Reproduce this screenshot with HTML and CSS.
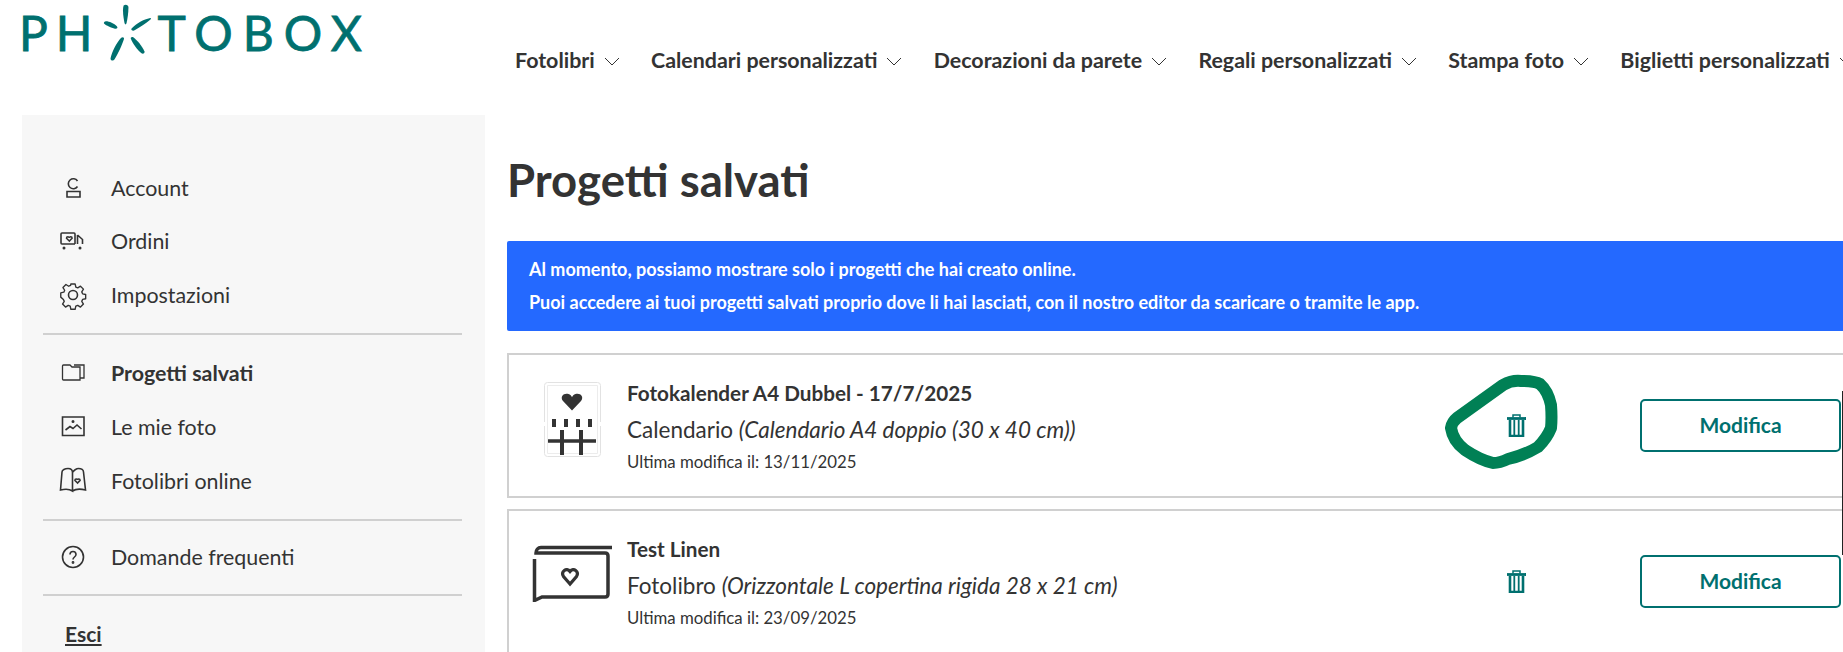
FILE: index.html
```html
<!DOCTYPE html>
<html lang="it">
<head>
<meta charset="utf-8">
<title>Progetti salvati</title>
<link rel="stylesheet" href="styles.css">
</head>
<body>
<header class="top">
  <a class="logo"><span>PH</span><svg class="star" viewBox="0 0 48 60"><g fill="#00706f"><path d="M20.500 1.500c2-1.700 5-.6 5 2 0 5-1 12-2 16.500-.5 1.500-1.500 1.500-2 0-1-5-2.500-14-1-18.500z"/><path d="M29 25c5-5 12-9 19-10.500 1-.2 1 1 .3 1.500-5 4-11 8-16 11-2.500 1.500-5-.3-3.300-2z"/><path d="M1.500 18c3-.5 9 2 12 5 1.500 1.500 0 3-2 2.500-4-1-9-3-11-5-1-1-.2-2.300 1-2.500z"/><path d="M28 36c-.5-1.500 1-2.500 2.500-1.500 4 3 9 9 11.500 14.500.8 2-1.500 3-3 2-4-3-9-10-11-15z"/><path d="M18 35c1.500-1.500 3.500-.5 2.800 1.500-2 6-6 15-9.800 21-1.200 2-4.500 1-4-1.500 1.500-6 6-16 11-21z"/></g></svg><span class="logo-end">TOBOX</span></a>
  <nav class="nav">
    <a class="nav-item">Fotolibri<svg class="chev" viewBox="0 0 16 9"><path d="M1 1l7 7 7-7"/></svg></a>
    <a class="nav-item">Calendari personalizzati<svg class="chev" viewBox="0 0 16 9"><path d="M1 1l7 7 7-7"/></svg></a>
    <a class="nav-item">Decorazioni da parete<svg class="chev" viewBox="0 0 16 9"><path d="M1 1l7 7 7-7"/></svg></a>
    <a class="nav-item">Regali personalizzati<svg class="chev" viewBox="0 0 16 9"><path d="M1 1l7 7 7-7"/></svg></a>
    <a class="nav-item">Stampa foto<svg class="chev" viewBox="0 0 16 9"><path d="M1 1l7 7 7-7"/></svg></a>
    <a class="nav-item">Biglietti personalizzati<svg class="chev" viewBox="0 0 16 9"><path d="M1 1l7 7 7-7"/></svg></a>
  </nav>
</header>
<div class="layout">
  <aside class="side">
    <ul class="menu">
      <li><svg class="ico" viewBox="0 0 30 30"><path d="M19.500 8a5 5 0 1 0 0 5.500M9 18.500h13M9 18.500h13v5.500H9z"/></svg>Account</li>
      <li><svg class="ico" viewBox="0 0 30 30"><path d="M17 18H4a1 1 0 0 1-1-1V8a1 1 0 0 1 1-1h12a1 1 0 0 1 1 1v10M19.500 9l5 4.500V18M19.500 9v9M11.300 15l-2.800-2.800c0-1.800 2.800-1.800 2.800-.3 0-1.500 2.800-1.500 2.800.3z"/><circle cx="6" cy="22" r=".7"/><circle cx="22" cy="22" r=".7"/></svg>Ordini</li>
      <li><svg class="ico" viewBox="0 0 30 30"><circle cx="15" cy="15" r="4.500"/><path d="M12.500 2h5l.8 3.600 2.300 1 3.200-2 3.500 3.500-2 3.200 1 2.300 3.600.8v5l-3.600.8-1 2.300 2 3.200-3.500 3.500-3.200-2-2.300 1-.8 3.600h-5l-.8-3.600-2.300-1-3.200 2-3.500-3.500 2-3.200-1-2.300L.600 17.500v-5l3.600-.8 1-2.300-2-3.200 3.500-3.500 3.200 2 2.300-1z" transform="translate(2.250 2.250) scale(.85)" stroke-linejoin="round"/></svg>Impostazioni</li>
    </ul>
    <hr class="rule">
    <ul class="menu wide">
      <li class="active"><svg class="ico thin" viewBox="0 0 30 30"><path d="M4.500 8c0-.5.500-1 1-1H12l2 2h8v13H5.500c-.5 0-1-.5-1-1zM16 7h10v13h-4"/></svg>Progetti salvati</li>
      <li><svg class="ico" viewBox="0 0 30 30"><path d="M4.500 5H26v18.500H4.500zM7.500 18l4.500-3.500 3 2 4-3.500 4.500 4"/><circle cx="15" cy="9.500" r=".7"/></svg>Le mie foto</li>
      <li><svg class="ico" viewBox="0 0 30 30"><path d="M14.500 25c-3-2-8-2-12-1l1.500-18c0-2 3-3.500 6-3.500 3 0 4.500 2 4.500 4zM14.500 25c3-2 9-2 13-1l-2-18c0-2-2-3.500-5-3.500-2 0-5 2-6 4M19.500 17l-2.600-2.600c0-1.800 2.600-1.800 2.600-.3 0-1.500 2.600-1.500 2.600.3zM14.500 6.500V25"/></svg>Fotolibri online</li>
    </ul>
    <hr class="rule">
    <ul class="menu single">
      <li><svg class="ico" viewBox="0 0 30 30"><circle cx="15" cy="15" r="10.500"/><path d="M12 12.500c0-4 6-4 6 0 0 2.500-3 2.500-3 5"/><circle cx="15" cy="20.500" r=".6"/></svg>Domande frequenti</li>
    </ul>
    <hr class="rule">
    <a class="logout">Esci</a>
  </aside>
  <main class="main">
    <h1 class="title">Progetti salvati</h1>
    <div class="notice">
      <p>Al momento, possiamo mostrare solo i progetti che hai creato online.</p>
      <p>Puoi accedere ai tuoi progetti salvati proprio dove li hai lasciati, con il nostro editor da scaricare o tramite le app.</p>
    </div>
    <article class="card">
      <div class="thumb"><svg class="cal" viewBox="0 0 57 75"><path d="M.5 40V3.500a3 3 0 0 1 3-3h50a3 3 0 0 1 3 3V40M.5 44v27.500a3 3 0 0 0 3 3h50a3 3 0 0 0 3-3V44" fill="none" stroke="#e2e2e2"/><path d="M3.500 3.500h50v68h-50z" fill="none" stroke="#ececec"/><path d="M28 28.500l-9-9.500c-3.500-4.500 1-8.500 5.500-7 1.700.6 3 1.800 3.500 3.300.5-1.500 1.800-2.700 3.500-3.300 4.500-1.500 9 2.500 5.500 7z" fill="#333"/><path d="M8 37h4v8H8zM20 37h4v8h-4zM32 37h4v8h-4zM44 37h4v8h-4zM4 57.300h48v3.400H4zM16 48h4v25h-4zM35 48h4v25h-4z" fill="#333"/></svg></div>
      <div class="info">
        <h2 class="name">Fotokalender A4 Dubbel - 17/7/2025</h2>
        <p class="kind">Calendario <em>(Calendario A4 doppio (30 x 40 cm))</em></p>
        <p class="date">Ultima modifica il: 13/11/2025</p>
      </div>
      <svg class="trash" viewBox="0 0 19 23"><path class="lid" d="M0 4.500h19"/><path class="handle" d="M6 3.500V1h7v2.500"/><path class="bin" d="M3 6v16h13V6"/><path class="slat" d="M7.300 6v16M11.700 6v16"/></svg>
      <a class="edit">Modifica</a>
    </article>
    <article class="card">
      <div class="thumb"><svg class="book" viewBox="0 0 80 57"><path d="M80 2.500H9C6 2.500 4 5 4 8h69q3 0 3 3v38q0 3-3 3H10l-7.500 3.500V14" fill="none" stroke="#333" stroke-width="3.500"/><path d="M38 39l-6.500-7.500c-3-5 3-9.500 6.500-5 3.500-4.500 9.500 0 6.500 5z" fill="none" stroke="#333" stroke-width="3.200"/></svg></div>
      <div class="info">
        <h2 class="name">Test Linen</h2>
        <p class="kind">Fotolibro <em>(Orizzontale L copertina rigida 28 x 21 cm)</em></p>
        <p class="date">Ultima modifica il: 23/09/2025</p>
      </div>
      <svg class="trash" viewBox="0 0 19 23"><path class="lid" d="M0 4.500h19"/><path class="handle" d="M6 3.500V1h7v2.500"/><path class="bin" d="M3 6v16h13V6"/><path class="slat" d="M7.300 6v16M11.700 6v16"/></svg>
      <a class="edit">Modifica</a>
    </article>
  </main>
</div>
<svg class="scribble" viewBox="0 0 130 100"><path d="M11 55Q12 49 17 45L63 12Q72 7 81 8Q95 8 100 11Q108 18 111 32Q112 45 111 55Q107 65 98 74Q85 82 68 86Q60 90 53 90Q40 87 25 77Q13 68 11 55Z"/></svg>
<div class="edge"></div>
</body>
</html>
```
FILE: styles.css
```css
* { box-sizing: border-box; }
html, body { margin: 0; padding: 0; }
body { width: 1843px; height: 652px; overflow: hidden; position: relative; background: #fff; color: #333; font-family: Lato, "Noto Sans", sans-serif; }
.top { height: 115px; display: flex; position: relative; }
.logo { display: flex; align-items: flex-start; flex: none; width: 475px; margin: 4px 0 0 19px; color: #00706f; font-size: 48px; line-height: 58px; letter-spacing: 8px; height: 58px; -webkit-text-stroke: .8px #00706f; }
.logo-end { letter-spacing: 10px; }
.star { width: 48px; height: 58px; margin: 0 6px 0 3px; }
.nav { display: flex; gap: 31.300px; margin: 45px 0 0 21px; white-space: nowrap; }
.nav-item { display: flex; align-items: center; height: 30px; font-size: 21.400px; font-weight: 700; color: #333; }
.chev { width: 16px; height: 9px; margin-left: 9px; margin-top: 2px; fill: none; stroke: #333; stroke-width: 1; }
.layout { display: flex; margin-left: 22px; gap: 22px; }
.side { width: 463px; height: 537px; flex: none; background: #f7f7f7; padding: 46px 23px 0 21px; }
.menu { list-style: none; margin: 0; padding: 0; }
.menu li { display: flex; align-items: center; height: 53.500px; font-size: 21.400px; color: #333; }
.menu.wide li { height: 54px; }
.menu.single li { height: 51px; }
.menu li.active { font-weight: 700; }
.ico { width: 30px; height: 30px; margin: 0 23px 0 15px; fill: none; stroke: #333; stroke-width: 1.600; flex: none; }
.ico.thin { stroke-width: 1.300; }
.rule { border: 0; border-top: 2px solid #d0d0d0; margin: 11px 0; }
.logout { display: inline-block; margin: 14px 0 0 22px; font-size: 21px; font-weight: 700; text-decoration: underline; }
.main { flex: none; width: 1400px; padding-top: 38px; }
.title { margin: 0; font-size: 45.500px; line-height: 54px; font-weight: 700; color: #333; }
.notice { margin: 34px 0 22px; height: 90px; background: #2469ff; color: #fff; padding: 17px 22px; font-size: 18px; font-weight: 700; border-radius: 2px 0 0 2px; }
.notice p { margin: 0 0 11px; line-height: 22px; white-space: nowrap; }
.card { display: flex; position: relative; height: 145px; margin-bottom: 11px; border: 2px solid #d0d0d0; border-right: 0; align-items: center; }
.thumb { width: 118px; flex: none; display: flex; }
.cal { width: 57px; height: 75px; margin: 0 0 12px 35px; }
.book { width: 80px; height: 57px; margin: 0 0 16px 23px; }
.info { width: 881px; flex: none; padding-top: 3px; }
.name { margin: 0; font-size: 20.700px; line-height: 24px; font-weight: 700; }
.kind { margin: 13px 0 0; font-size: 22.500px; line-height: 24px; }
.date { margin: 9px 0 0; font-size: 16.800px; line-height: 22px; }
.trash { width: 19px; height: 23px; flex: none; fill: none; stroke: #00706f; margin-left: -1px; }
.lid { stroke-width: 2.800; }
.handle { stroke-width: 1.500; }
.bin { stroke-width: 2.600; }
.slat { stroke-width: 1.800; }
.edit { display: flex; align-items: center; justify-content: center; width: 201px; height: 53px; margin-left: 114px; padding-bottom: 2px; border: 2px solid #00706f; border-radius: 5px; font-size: 21px; font-weight: 700; color: #00706f; flex: none; }
.scribble { position: absolute; left: 1440px; top: 373px; width: 130px; height: 100px; fill: none; stroke: #008055; stroke-width: 12; stroke-linejoin: round; }
.edge { position: absolute; left: 1842px; top: 391px; width: 1px; height: 164px; background: #222; }
```
